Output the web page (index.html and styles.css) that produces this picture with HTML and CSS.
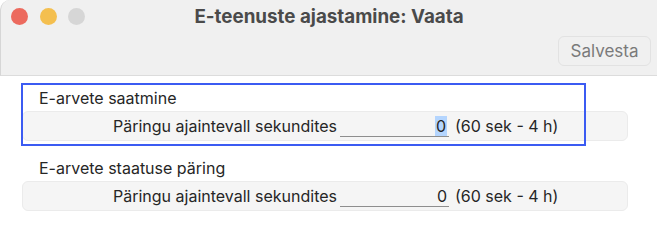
FILE: index.html
```html
<!DOCTYPE html>
<html lang="et">
<head>
  <meta charset="UTF-8" />
  <meta name="viewport" content="width=device-width, initial-scale=1.0" />
  <title>E-teenuste ajastamine: Vaata</title>
  <link rel="stylesheet" href="styles.css">
</head>
<body>
  <div class="window">
    <div class="titlebar">
      <div class="title-row">
        <div class="lights">
          <span class="light red"></span>
          <span class="light yellow"></span>
          <span class="light off"></span>
        </div>
        <div class="title">E-teenuste ajastamine: Vaata</div>
        <div></div>
      </div>
      <div class="toolbar">
        <button class="btn" disabled>Salvesta</button>
      </div>
    </div>

    <div class="content">
      <div class="section">
        <div class="focus-ring"></div>
        <div class="section-label">E-arvete saatmine</div>
        <div class="row">
          <span class="field-label">Päringu ajaintevall sekundites</span>
          <span class="field"><span class="sel">0</span></span>
          <span class="hint">(60 sek - 4 h)</span>
        </div>
      </div>

      <div class="section">
        <div class="section-label">E-arvete staatuse päring</div>
        <div class="row">
          <span class="field-label">Päringu ajaintevall sekundites</span>
          <span class="field">0</span>
          <span class="hint">(60 sek - 4 h)</span>
        </div>
      </div>
    </div>
  </div>
</body>
</html>
```

FILE: styles.css
```css
body {
  margin: 0;
  background: #fff;
  font-family: Inter, "Noto Sans", sans-serif;
  color: #262626;
}
.window {
  width: 657px;
  height: 230px;
  overflow: hidden;
}
.titlebar {
  background: #f0f0f0;
  height: 75px;
  border-bottom: 1px solid #dcdcdc;
  border-left: 1px solid #d6d6d6;
  border-top-left-radius: 10px;
  box-sizing: content-box;
}
.title-row {
  display: grid;
  grid-template-columns: 1fr auto 1fr;
  align-items: center;
  height: 33px;
}
.lights {
  display: flex;
  gap: 11.5px;
  padding-left: 10px;
}
.light {
  width: 17px;
  height: 17px;
  border-radius: 50%;
}
.red { background: #ec6a5e; }
.yellow { background: #f4bf4f; }
.off { background: #d6d6d6; }
.title {
  font-size: 18.8px;
  font-weight: 700;
  color: #4a4a4a;
}
.toolbar {
  display: flex;
  justify-content: flex-end;
  padding: 3px 6px 0 0;
}
.btn {
  width: 93px;
  height: 30px;
  font-family: inherit;
  font-size: 17px;
  color: #7a7a7a;
  background: #f0f0f0;
  border: 1px solid #e2e2e2;
  border-radius: 6px;
  padding: 0;
}
.content {
  padding: 12px 29px 0 22px;
  display: flex;
  flex-direction: column;
  gap: 17px;
}
.section {
  position: relative;
}
.focus-ring {
  position: absolute;
  left: -1px;
  top: -5px;
  width: 565px;
  height: 63px;
  box-sizing: border-box;
  border: 2px solid #3b5bf2;
}
.section-label {
  font-size: 16px;
  line-height: 20px;
  padding-left: 17px;
  margin-bottom: 3px;
}
.row {
  display: flex;
  align-items: center;
  height: 30px;
  box-sizing: border-box;
  background: #f5f5f5;
  border: 1px solid #ebebeb;
  border-radius: 6px;
  padding-left: 90px;
  font-size: 16px;
}
.field {
  width: 109px;
  margin-left: 3px;
  text-align: right;
  border-bottom: 1px solid #8e8e8e;
  line-height: 20px;
  padding-right: 2px;
  box-sizing: border-box;
}
.sel {
  background: #b4d5fe;
  padding: 0 1px;
}
.hint {
  margin-left: 6px;
}
```
